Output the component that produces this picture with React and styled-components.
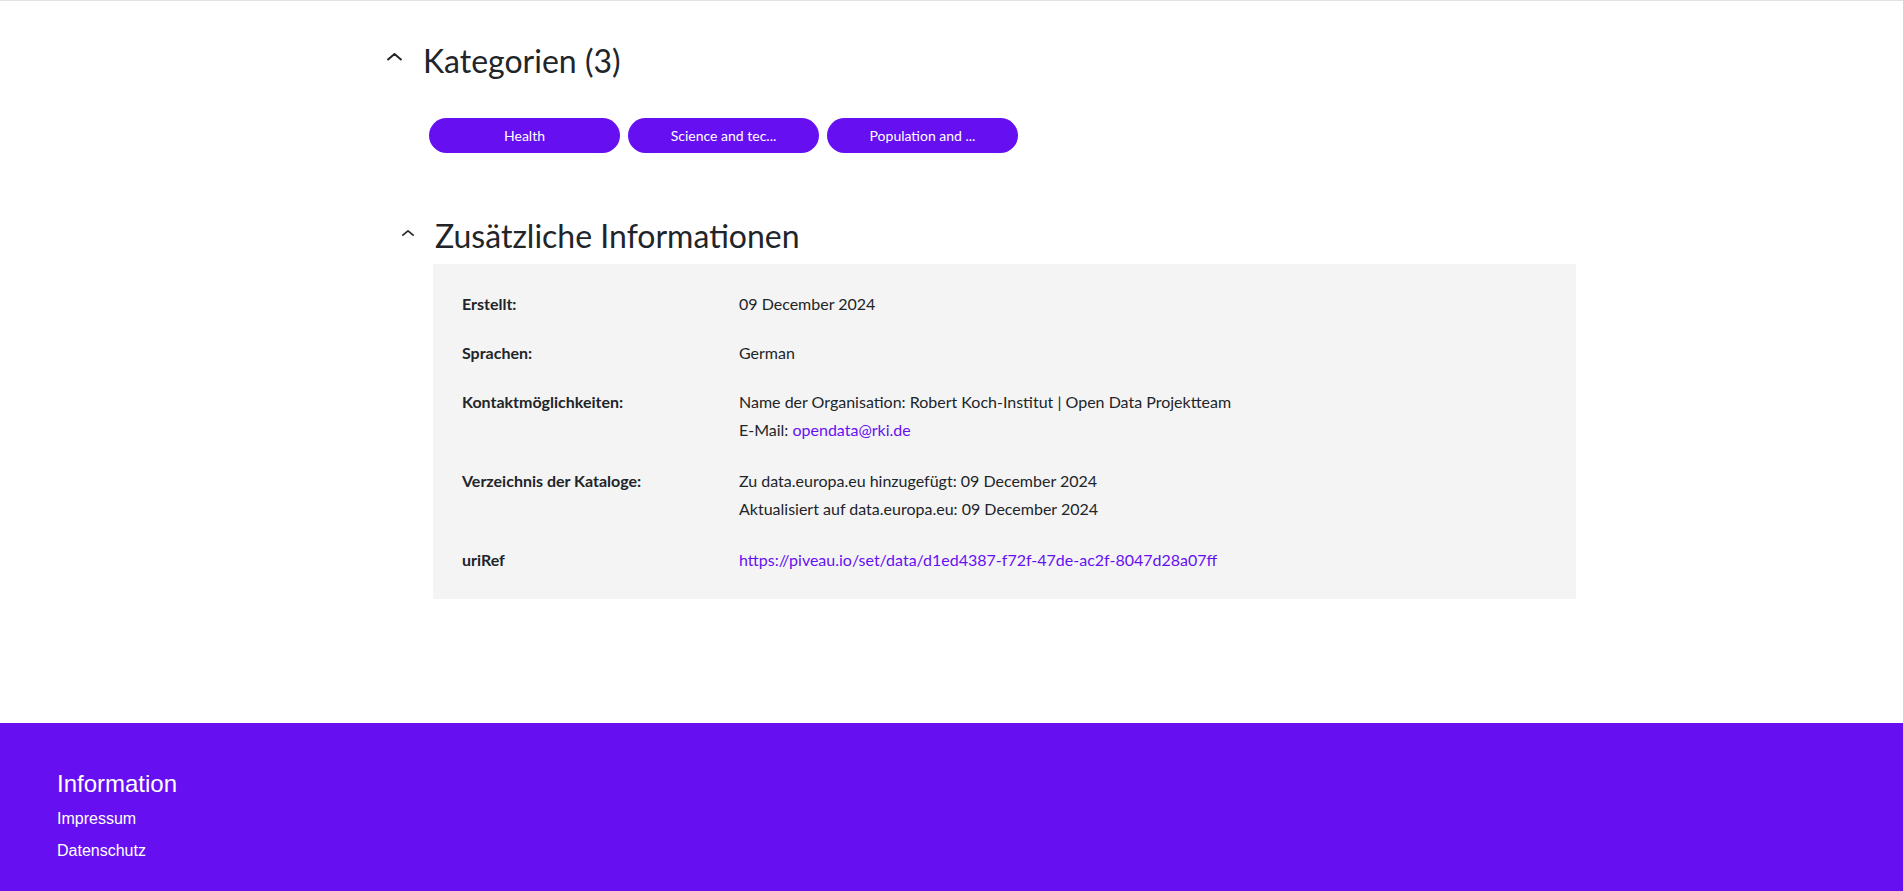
import React from "react";
import styled, { createGlobalStyle } from "styled-components";

const GlobalStyle = createGlobalStyle`
  body {
    margin: 0;
    font-family: "Lato", "Open Sans", sans-serif;
    color: #212529;
    background: #ffffff;
  }
`;

const categories = ["Health", "Science and tec...", "Population and ..."];

const infoRows = [
  { label: "Erstellt:", values: [["09 December 2024"]] },
  { label: "Sprachen:", values: [["German"]] },
  {
    label: "Kontaktmöglichkeiten:",
    values: [
      ["Name der Organisation: Robert Koch-Institut | Open Data Projektteam"],
      ["E-Mail: ", { link: "opendata@rki.de" }],
    ],
  },
  {
    label: "Verzeichnis der Kataloge:",
    values: [
      ["Zu data.europa.eu hinzugefügt: 09 December 2024"],
      ["Aktualisiert auf data.europa.eu: 09 December 2024"],
    ],
  },
  {
    label: "uriRef",
    values: [[{ link: "https://piveau.io/set/data/d1ed4387-f72f-47de-ac2f-8047d28a07ff" }]],
  },
];

const Chevron = ({ size }) => (
  <ChevronIcon width={size} height={size * 0.5} viewBox="0 0 14 7" fill="none">
    <polyline
      points="1,6 7,1 13,6"
      stroke="#212529"
      strokeWidth="1.9"
      strokeLinecap="round"
      strokeLinejoin="round"
    />
  </ChevronIcon>
);

export default function App() {
  return (
    <Page>
      <GlobalStyle />
      <TopRule />
      <Main>
        <Section>
          <SectionHeader>
            <Chevron size={15} />
            <SectionTitle>Kategorien (3)</SectionTitle>
          </SectionHeader>
          <ChipRow>
            {categories.map((c) => (
              <Chip key={c}>{c}</Chip>
            ))}
          </ChipRow>
        </Section>

        <Section $indent={15} $top={64}>
          <SectionHeader>
            <Chevron size={12} />
            <SectionTitle>Zusätzliche Informationen</SectionTitle>
          </SectionHeader>
          <InfoBox>
            {infoRows.map((row) => (
              <InfoRow key={row.label} $multi={row.values.length > 1}>
                <InfoLabel>{row.label}</InfoLabel>
                <InfoValue>
                  {row.values.map((line, i) => (
                    <ValueLine key={i}>
                      {line.map((part, j) =>
                        typeof part === "string" ? (
                          part
                        ) : (
                          <Link key={j} href="#">
                            {part.link}
                          </Link>
                        )
                      )}
                    </ValueLine>
                  ))}
                </InfoValue>
              </InfoRow>
            ))}
          </InfoBox>
        </Section>
      </Main>

      <Footer>
        <FooterTitle>Information</FooterTitle>
        <FooterLink href="#">Impressum</FooterLink>
        <FooterLink href="#">Datenschutz</FooterLink>
      </Footer>
    </Page>
  );
}

const Page = styled.div`
  min-height: 100vh;
  display: flex;
  flex-direction: column;
`;

const TopRule = styled.div`
  height: 1px;
  background: #e2e2e2;
`;

const Main = styled.main`
  flex: 1;
  padding: 41px 0 124px 387px;
`;

const Section = styled.section`
  margin-left: ${(p) => p.$indent || 0}px;
  margin-top: ${(p) => p.$top || 0}px;
`;

const SectionHeader = styled.div`
  display: flex;
  align-items: center;
  gap: 21px;
`;

const ChevronIcon = styled.svg`
  display: block;
  flex-shrink: 0;
  margin-top: -8px;
`;

const SectionTitle = styled.h2`
  margin: 0;
  font-size: 32px;
  font-weight: 400;
  line-height: 1.2;
  color: #212529;
`;

const ChipRow = styled.div`
  display: flex;
  gap: 8px;
  margin: 38px 0 0 42px;
`;

const Chip = styled.button`
  width: 191px;
  height: 35px;
  border: none;
  border-radius: 18px;
  background: #6610f2;
  color: #ffffff;
  font-family: "Lato", sans-serif;
  font-size: 14px;
  white-space: nowrap;
  overflow: hidden;
  text-overflow: ellipsis;
  padding: 0 12px;
  cursor: pointer;
`;

const InfoBox = styled.div`
  margin: 8px 0 0 31px;
  width: 1143px;
  box-sizing: border-box;
  background: #f4f4f4;
  padding: 26px 29px 25px;
`;

const InfoRow = styled.div`
  display: grid;
  grid-template-columns: 277px 1fr;
  font-size: 16px;
  line-height: 28px;
  margin-bottom: ${(p) => (p.$multi ? 23 : 21)}px;

  &:last-child {
    margin-bottom: 0;
  }
`;

const InfoLabel = styled.div`
  font-weight: 700;
`;

const InfoValue = styled.div`
  display: flex;
  flex-direction: column;
`;

const ValueLine = styled.div``;

const Link = styled.a`
  color: #6610f2;
  text-decoration: none;
`;

const Footer = styled.footer`
  background: #6610f2;
  color: #ffffff;
  padding: 47px 57px 30px;
  display: flex;
  flex-direction: column;
  font-family: "Liberation Sans", Arial, sans-serif;
`;

const FooterTitle = styled.div`
  font-size: 24px;
  line-height: 1.2;
  margin-bottom: 4px;
`;

const FooterLink = styled.a`
  color: #ffffff;
  text-decoration: none;
  font-size: 16px;
  line-height: 32px;
`;
